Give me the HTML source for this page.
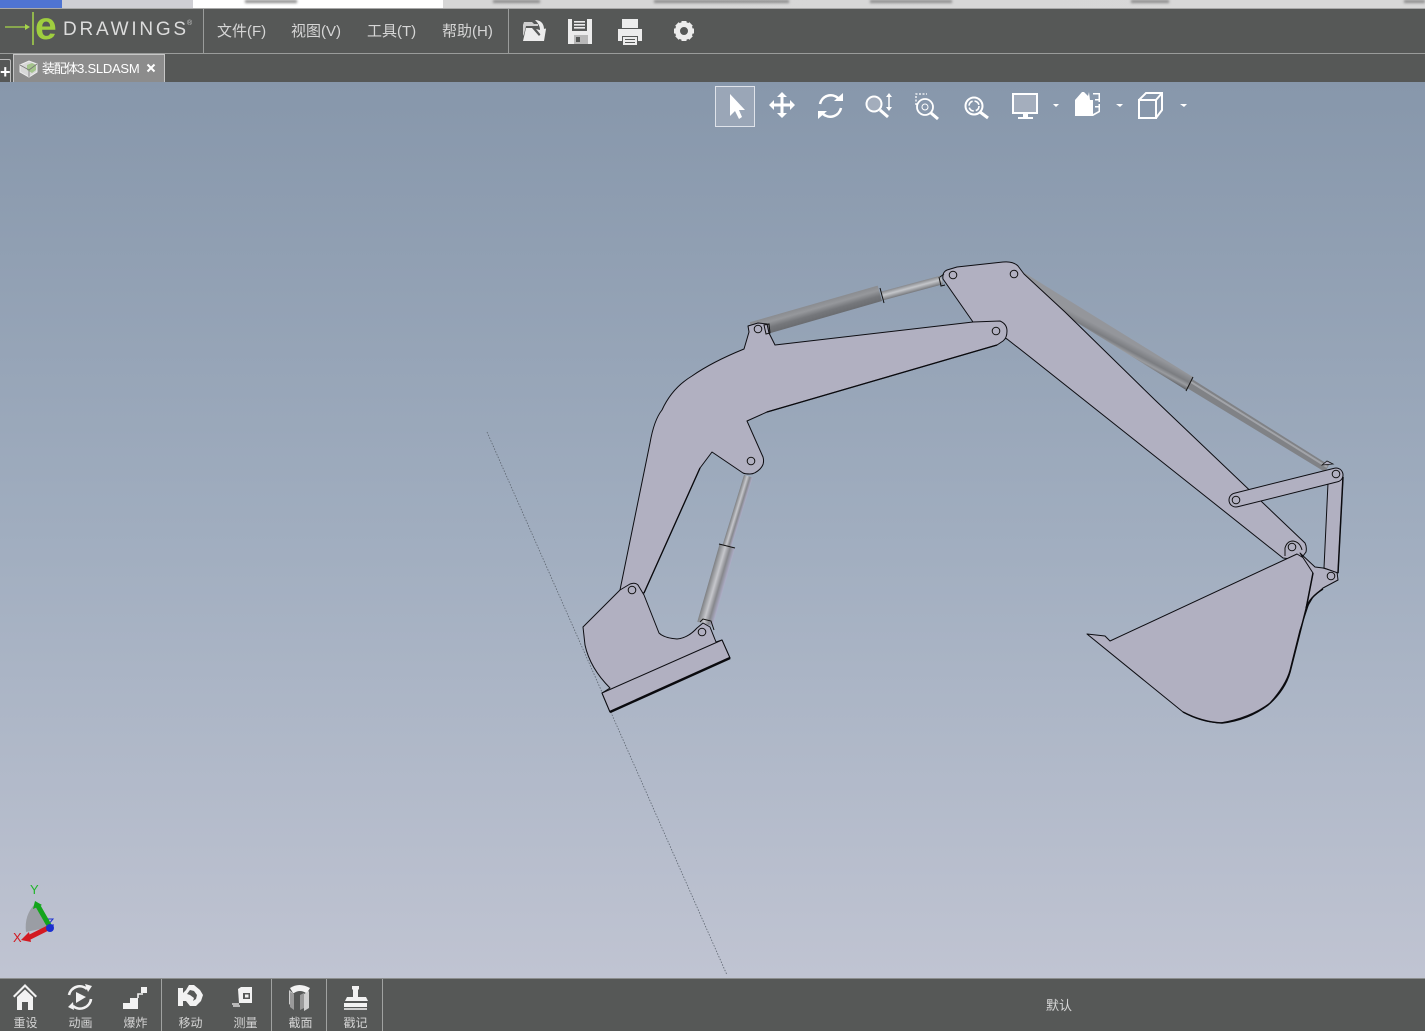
<!DOCTYPE html>
<html><head><meta charset="utf-8">
<style>
html,body{margin:0;padding:0;width:1425px;height:1031px;overflow:hidden;background:#8797ab}
body{position:relative;font-family:"Liberation Sans","Noto Sans CJK SC",sans-serif}
.a{position:absolute}
.t{position:absolute;white-space:nowrap}
.menu{font-size:15px;color:#d6d6d6;top:23px;line-height:18px}
.lab{font-size:12px;color:#d4d4d4;top:1016px;line-height:15px;width:55px;text-align:center}
.b{position:absolute;top:0;height:3px;background:#8a8a8a;filter:blur(1.2px)}
</style></head><body>
<div class="a" style="left:0;top:82px;width:1425px;height:896px;background:linear-gradient(180deg,#8797ab 0%,#a0adbf 50%,#c0c4d2 100%)"></div>

<!-- top strip -->
<div class="a" style="left:0;top:0;width:1425px;height:9px;overflow:hidden;background:linear-gradient(90deg,#cfcfd4 0,#cfcfd4 193px,#fff 193px,#fff 443px,#d6d6d6 443px,#d8d8d8 100%)">
<div class="b" style="left:245px;width:52px"></div>
<div class="b" style="left:493px;width:47px"></div>
<div class="b" style="left:654px;width:135px"></div>
<div class="b" style="left:870px;width:82px"></div>
<div class="b" style="left:1131px;width:38px"></div>
<div class="b" style="left:1404px;width:21px"></div>
</div>
<div class="a" style="left:0;top:0;width:62px;height:8px;background:#4f74d2"></div>
<div class="a" style="left:0;top:8px;width:1425px;height:1px;background:#a9a9a9"></div>
<div class="a" style="left:0;top:9px;width:1425px;height:44px;background:#565857"></div>
<div class="a" style="left:0;top:53px;width:1425px;height:1px;background:#9a9c9b"></div>
<div class="a" style="left:0;top:54px;width:1425px;height:28px;background:#565857"></div>
<div class="a" style="left:203px;top:9px;width:1px;height:44px;background:#9a9c9b"></div>
<div class="a" style="left:508px;top:9px;width:1px;height:44px;background:#9a9c9b"></div>

<!-- logo -->
<svg class="a" style="left:0;top:9px" width="60" height="40"><path d="M5 18H27" stroke="#a6d64a" stroke-width="1.300"/><path d="M25 15l5 3-5 3z" fill="#a6d64a"/><path d="M33 3V36" stroke="#a6d64a" stroke-width="1.500"/></svg>
<div class="t" style="left:35px;top:5px;font-size:39px;line-height:44px;font-weight:bold;color:#9fce3f">e</div>
<div class="t" style="left:63px;top:19px;font-size:19px;line-height:22px;letter-spacing:2.75px;color:#dcdcdc">DRAWINGS</div>
<div class="t" style="left:187px;top:20px;font-size:7px;line-height:8px;color:#ccc">®</div>

<div class="t menu" style="left:217px">文件(F)</div>
<div class="t menu" style="left:291px">视图(V)</div>
<div class="t menu" style="left:367px">工具(T)</div>
<div class="t menu" style="left:442px">帮助(H)</div>

<!-- top toolbar icons -->
<svg class="a" style="left:515px;top:12px" width="190" height="38" fill="#ececec">
<path d="M8 13l1-3h8l2 2h4v2H11l-2 8-1 2z" fill="#cfcfcf"/>
<path d="M8 29l3-13h6l7 8 6-7h1l-2 12z"/>
<path d="M20 8c5 0 9 3 9 9l2-1-5 7-5-6 4 1c0-4-2-7-5-10z"/>
<path d="M53 7h24v25H53z"/><path d="M57 7h15v12H57z" fill="#565857"/><path d="M59 9h11v1.600H59zM59 12h11v1.600H59zM59 15h11v1.600H59z"/>
<path d="M59 23h14v9H59z" fill="#b8b8b8"/><path d="M61 25h4v5h-4z" fill="#565857"/>
<path d="M107 7h16v9h-16z"/><path d="M103 17h24v12h-4v-5h-16v5h-4z"/><path d="M108 25h14v8h-14z"/><path d="M110 27h10v1h-10zM110 30h10v1h-10z" fill="#565857"/>
<g transform="translate(169 19)"><circle r="6.500" fill="none" stroke="#ececec" stroke-width="5"/><g id="gt"><path d="M-2.500-10h5v5h-5zM-2.500 5h5v5h-5zM-10-2.500h5v5h-5zM5-2.500h5v5h-5z"/></g><path d="M-2.500-10h5v5h-5zM-2.500 5h5v5h-5zM-10-2.500h5v5h-5zM5-2.500h5v5h-5z" transform="rotate(45)"/></g>
</svg>

<!-- tabs -->
<div class="a" style="left:0;top:59px;width:11px;height:23px;border-top:1px solid #bbb;border-right:1px solid #bbb;border-radius:0 2px 0 0;box-sizing:border-box"></div>
<div class="t" style="left:0;top:62px;font-size:18px;line-height:20px;font-weight:bold;color:#fff">+</div>
<div class="a" style="left:13px;top:54px;width:152px;height:28px;background:#8c8c8c;border:1px solid #c6c6c6;border-bottom:0;box-sizing:border-box"></div>
<svg class="a" style="left:19px;top:60px" width="20" height="18"><path d="M1 5l9-4 8 3v8l-8 5-9-5z" fill="#d8d8d8" stroke="#eee"/><path d="M8 5l5-2 4 2v5l-4 3-5-3z" fill="#a4c48c"/><path d="M1 5l9 5v7M10 10l8-6" stroke="#777" fill="none" stroke-width=".8"/></svg>
<div class="t" style="left:42px;top:60px;font-size:13px;line-height:17px;color:#fff"><span style="letter-spacing:-1.300px">装配体</span><span style="letter-spacing:-.25px">3.SLDASM</span></div>
<svg class="a" style="left:146px;top:63px" width="11" height="11"><path d="M1.500 1.500l7 7M8.500 1.500l-7 7" stroke="#fff" stroke-width="2"/></svg>

<!-- 3D view toolbar -->
<div class="a" style="left:715px;top:86px;width:40px;height:41px;box-sizing:border-box;border:1px solid #dfe3ea;background:#9aa6b7"></div>
<svg class="a" style="left:705px;top:80px" width="490" height="50" fill="#fff" stroke="none">
<path d="M25 14V36l5-5 4 8 3-2-3-7h6z"/>
<path d="M77 12l5 5h-3.500v6.500h6.500V20l5 5-5 5v-3.500h-6.500V33H82l-5 5-5-5h3.500v-6.500H69V30l-5-5 5-5v3.500h6.500V17H72z"/>
<g fill="none" stroke="#fff" stroke-width="2.500"><path d="M115 24a11 11 0 0 1 18-6M136 28a11 11 0 0 1-18 6"/></g>
<path d="M129 21l9 0 0-8zM122 31l-9 0 0 8z"/>
<g fill="none" stroke="#fff"><circle cx="169" cy="24" r="7.500" stroke-width="2" fill="#a3adbc"/><path d="M175 30l8 7" stroke-width="3"/><path d="M184 16v12" stroke-width="1.500"/>
<circle cx="220" cy="27" r="8" stroke-width="1.800"/><path d="M226 33l7 6" stroke-width="3"/><path d="M211 25v-11h11" stroke-width="1.300" stroke-dasharray="2 1.500"/><circle cx="220" cy="27" r="3" stroke-width="1"/>
<circle cx="269" cy="26" r="8.500" stroke-width="2"/><circle cx="269" cy="26" r="5" stroke-width="1.600" stroke-dasharray="6 2"/><path d="M275 32l8 6" stroke-width="3"/></g>
<path d="M181 17l3-4 3 4zM181 27l3 4 3-4z"/>
<path d="M307 13h26v21h-10v3h5v2h-15v-2h5v-3h-11zM309 15v17h22V15z"/>
<path d="M309 15h22v17h-22z" fill="#a4aebd"/>
<path d="M347 23h6l-3 3zM410 23h7l-3 3zM474 23h7l-3 3z" transform="translate(1 1)"/>
<path d="M370 20l7-8h2l4 4 1-4 1 8h3v16h-18z"/>
<path d="M388 13h7v9h-1.500v-7.500H388zM395 24v8l-7 4v-2l5.500-3v-7z"/>
<path d="M390 19h4v1.500h-4zM390 26h4v1.500h-4z"/>
<g fill="none" stroke="#fff" stroke-width="2"><path d="M434 20h17v18h-17zM434 20l7-7h16v17l-6 8M451 20l6-7"/></g>
</svg>

<!-- model -->
<svg class="a" style="left:0;top:0" width="1425" height="1031" viewBox="0 0 1425 1031">
<defs>
<linearGradient id="g1" x1="0" y1="0" x2="0" y2="1"><stop offset="0" stop-color="#8a8c90"/><stop offset=".3" stop-color="#96989c"/><stop offset=".65" stop-color="#75777b"/><stop offset="1" stop-color="#6a6c70"/></linearGradient>
<linearGradient id="g2" x1="0" y1="0" x2="0" y2="1"><stop offset="0" stop-color="#7d7f82"/><stop offset=".4" stop-color="#c6c7cc"/><stop offset=".7" stop-color="#86878c"/><stop offset="1" stop-color="#aeaec8"/></linearGradient>
<linearGradient id="g2b" x1="0" y1="0" x2="0" y2="1"><stop offset="0" stop-color="#85878b"/><stop offset=".45" stop-color="#c4c6ca"/><stop offset="1" stop-color="#75777b"/></linearGradient>
<linearGradient id="g3" gradientUnits="userSpaceOnUse" x1="1193" y1="377" x2="1186" y2="390"><stop offset="0" stop-color="#94969b"/><stop offset=".45" stop-color="#7b7d81"/><stop offset=".7" stop-color="#9a9ca0"/><stop offset="1" stop-color="#5f6165"/></linearGradient>
</defs>
<path d="M487 432L727 975" stroke="#5d6570" stroke-width=".8" stroke-dasharray="1.500 1.500" fill="none"/>

<!-- arm cylinder -->
<g transform="translate(727 546) rotate(-73)"><rect x="0" y="-4.500" width="73" height="9" fill="url(#g2)"/></g>
<g transform="translate(705 624) rotate(-74)"><rect x="0" y="-8" width="81" height="16" fill="url(#g2)"/></g>
<path d="M719 544L735 548" stroke="#111" stroke-width="1"/>

<!-- boom cylinder -->
<g transform="translate(752 330) rotate(-16)"><rect x="0" y="-8" width="133" height="16" fill="url(#g1)"/></g>
<g transform="translate(882 296) rotate(-15)"><rect x="0" y="-4.500" width="62" height="9" fill="url(#g2b)"/></g>
<path d="M880 288L884 303" stroke="#111" stroke-width="1"/>

<!-- stick cylinder -->
<path d="M1023 272L1193 377L1186 390L1016 285Z" fill="url(#g3)"/>
<path d="M1192 379L1329 465L1325 472L1187 388Z" fill="#808286"/>
<path d="M1191 382L1327 467" stroke="#a2a4a9" stroke-width="2"/>
<path d="M1193 377L1186 391" stroke="#111" stroke-width="1"/>

<g fill="#b1b0c1" stroke="#0d0d12" stroke-width="1" stroke-linejoin="round">
<!-- stick -->
<path d="M943 279Q942 272 947 270L957 267L1003 262Q1013 261 1018 266L1024 274L1065 312L1155 400L1305 543Q1307 547 1306 552L1300 560L1283 558L1200 492L1030 357L1007 339L973 322Z"/>
<!-- boom -->
<path d="M620 590L650 443Q654 420 662 410Q672 388 692 376Q712 362 744 349L749 332L748 326L758 323L767 324L769 333L775 345L973 322L1000 321Q1007 324 1007 331Q1007 338 1003 341L997 345L767 412L747 421L763 457Q765 464 760 469Q755 474 750 474Q745 474 743 473L712 452L700 468L644 593Z"/>
<!-- base -->
<path d="M583 627L620 590L630 584Q635 582 638 585L644 595L659 633Q664 638 677 639Q688 638 697 628L703 623L710 627L716 642L722 640L730 658L610 712L602 693L610 688Q590 668 585 645Z"/>
<!-- top plate -->
<path d="M602 693L722 640L730 658L610 712Z"/>
<!-- bucket -->
<path d="M1087 634L1105 636L1110 641L1297 554L1307 560L1313 573L1310 600L1300 630L1290 670Q1286 685 1270 703Q1250 718 1220 723Q1200 722 1183 712Z"/>
<!-- bucket ear -->
<path d="M1300 553L1315 567L1323 568L1337 572L1338 580L1323 588L1313 597L1306 609L1313 573Z"/>
<!-- link 2 -->
<path d="M1328 483L1343 477L1338 573L1324 568Z"/>
</g>
<path d="M764 325L769 324L770 333L766 334Z" fill="none" stroke="#111" stroke-width="1"/>
<path d="M940 277L944 274M939 277L941 286L945 285" fill="none" stroke="#111" stroke-width="1"/>
<path d="M700 622L703 619L711 621L714 630" fill="none" stroke="#111" stroke-width="1"/>
<!-- link 1 -->
<path d="M1236 500L1336 475" stroke="#0d0d12" stroke-width="15" stroke-linecap="round"/>
<path d="M1236 500L1336 475" stroke="#b1b0c1" stroke-width="13" stroke-linecap="round"/>
<path d="M1322 465L1327 461L1333 464Z" fill="#b1b0c1" stroke="#111" stroke-width=".8"/>
<!-- heavier edges -->
<g fill="none" stroke="#0a0a0e">
<path d="M610 712L730 658" stroke-width="2.400"/>
<path d="M1313 573L1306 609L1290 672Q1285 690 1268 705Q1248 720 1222 723Q1202 722 1183 712" stroke-width="1.500"/>
<path d="M1343 477L1338 573M1306 608Q1310 597 1323 589" stroke-width="1.500"/>
<path d="M767 412L997 345M700 468L644 593" stroke-width="1.300"/>
</g>
<!-- pins -->
<g fill="#b1b0c1" stroke="#111" stroke-width="1">
<circle cx="953" cy="275" r="3.800"/><circle cx="1014" cy="274" r="3.800"/><circle cx="996" cy="331" r="3.800"/><circle cx="758" cy="329" r="3.800"/><circle cx="751" cy="461" r="3.800"/><circle cx="632" cy="590" r="3.800"/><circle cx="702" cy="632" r="3.800"/><circle cx="1236" cy="500" r="3.800"/><circle cx="1336" cy="474" r="3.800"/><circle cx="1292" cy="547" r="3.800"/><circle cx="1331" cy="576" r="3.800"/>
</g>
<path d="M1285 556V548Q1287 541 1293 541Q1300 542 1302 550" fill="none" stroke="#111" stroke-width="1"/>

<!-- triad -->
<path d="M35 904Q24 915 26 932L50 927Z" fill="#9a9da4"/>
<path d="M47 919h6l-5 6h6" fill="none" stroke="#1b2fd0" stroke-width="1"/>
<path d="M50 927L38 906" stroke="#13a51c" stroke-width="5"/><path d="M33 909l2-8 7 4z" fill="#13a51c"/>
<path d="M50 927L28 938" stroke="#d31a22" stroke-width="5"/><path d="M29 932l-8 8 10 2z" fill="#d31a22"/>
<circle cx="50" cy="928" r="4" fill="#1b2fd0"/>
<text x="30" y="894" font-family="Liberation Sans" font-size="13" fill="#20b52b">Y</text>
<text x="13" y="942" font-family="Liberation Sans" font-size="13" fill="#d31a22">X</text>
</svg>

<!-- bottom bar -->
<div class="a" style="left:0;top:978px;width:1425px;height:53px;background:#565857;border-top:1px solid #8c8e8e;box-sizing:border-box"></div>
<div class="a" style="left:161px;top:979px;width:1px;height:52px;background:#a0a2a1"></div>
<div class="a" style="left:271px;top:979px;width:1px;height:52px;background:#a0a2a1"></div>
<div class="a" style="left:326px;top:979px;width:1px;height:52px;background:#a0a2a1"></div>
<div class="a" style="left:382px;top:979px;width:1px;height:52px;background:#a0a2a1"></div>
<svg class="a" style="left:0;top:979px" width="385" height="36" fill="#f2f2f2">
<path d="M25 5L13 17l1.500 1.500L25 8l10.500 10.500L37 17z"/><path d="M17 18l8-7.500 8 7.500v13h-5v-8h-6v8h-5z"/>
<g fill="none" stroke="#f2f2f2" stroke-width="2.600"><path d="M69 16a11 11 0 0 1 18-6M91 20a11 11 0 0 1-18 7"/></g>
<path d="M85 5l7 2-4 6zM74 31l-6-3 5-5z"/><path d="M76 13l10 5-10 6z"/>
<path d="M123 24h7v-5h8v11h-15z"/><path d="M130 29h8v-8h-8z"/><path d="M141 8h6v6h-6z"/><path d="M138 19v-4h5" fill="none" stroke="#f2f2f2" stroke-width="1.600"/>
<path d="M178 9h5v5l3-3 3-5h5l6 5 3 5-2 6-5 5h-6l-4-5h-3v5h-5zm12 2l-3 4 3 1 4 3-1 3 3-2 1-4-3-4z"/>
<path d="M238 10l3-2h11v16h-13z"/><rect x="243" y="14" width="7" height="6" fill="#565857"/><rect x="245" y="15.500" width="3.500" height="3"/><path d="M232 25h7M233 27h7" stroke="#f2f2f2" stroke-width="1.200"/>
<path d="M290 9q9-6 20 0l-3 5h-1q-6-4-12 0h-1z"/><path d="M289 11l5 4v14l-5-4z" fill="#cfcfcf"/><path d="M304 15l5-3v17l-5 3z" fill="#cfcfcf"/><path d="M294 15v16l-4-3V13zM300 31V16l4-2v15z" fill="#9a9a9a"/>
<path d="M352 7h7v3l-1 1v7h8l2 4h-23l2-4h6v-7l-1-1z"/><path d="M344 24h23v4h-23z"/><path d="M344 29h23v2h-23z" fill="#cfcfcf"/>
</svg>
<div class="t lab" style="left:-2px">重设</div>
<div class="t lab" style="left:53px">动画</div>
<div class="t lab" style="left:108px">爆炸</div>
<div class="t lab" style="left:163px">移动</div>
<div class="t lab" style="left:218px">测量</div>
<div class="t lab" style="left:273px">截面</div>
<div class="t lab" style="left:328px">戳记</div>
<div class="t" style="left:1046px;top:998px;font-size:13px;line-height:16px;color:#d8d8d8">默认</div>
</body></html>
